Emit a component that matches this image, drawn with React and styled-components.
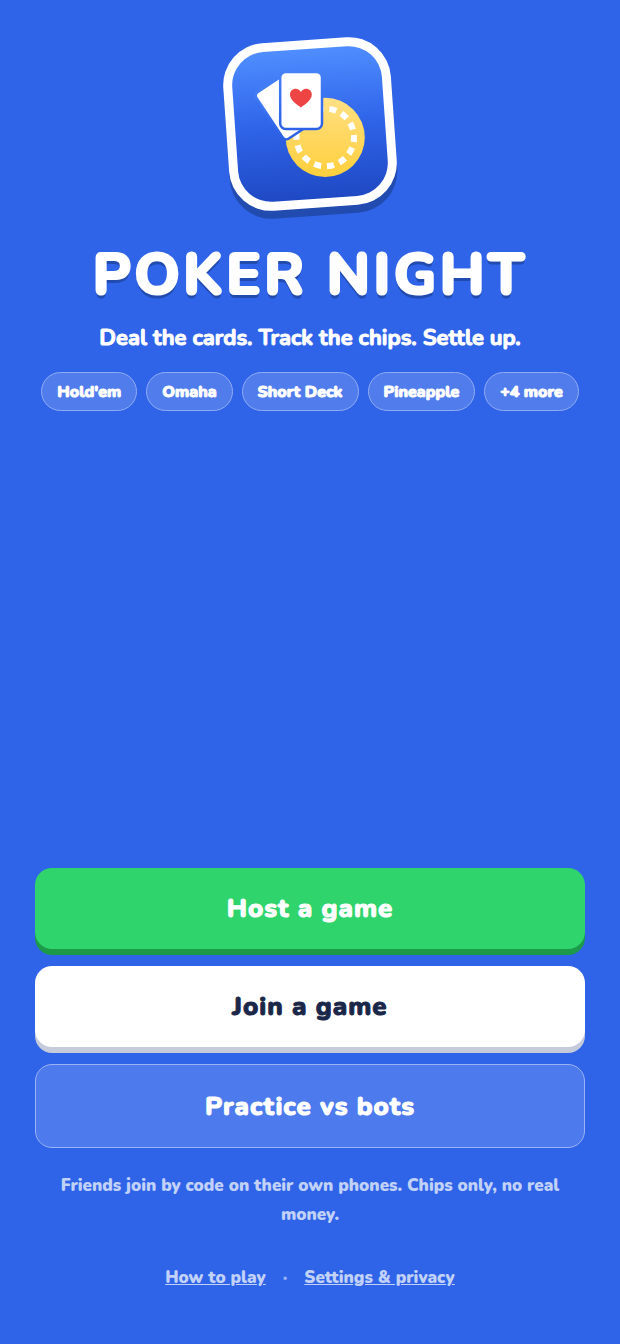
import React from 'react'
import styled, { createGlobalStyle } from 'styled-components';

const variants = ['Hold\'em', 'Omaha', 'Short Deck', 'Pineapple', '+4 more'];

function Logo() {
  return (
    <LogoSvg viewBox="0 0 200 200" role="img" aria-label="Poker Night logo">
      <defs>
        <linearGradient id="tile" gradientUnits="userSpaceOnUse" x1="0" y1="24" x2="0" y2="174">
          <stop offset="0" stopColor="#4f8dff" />
          <stop offset="0.5" stopColor="#2f64e9" />
          <stop offset="1" stopColor="#1f49c4" />
        </linearGradient>
        <linearGradient id="chip" x1="0" y1="0" x2="0" y2="1">
          <stop offset="0" stopColor="#ffe084" />
          <stop offset="1" stopColor="#ffcf3c" />
        </linearGradient>
      </defs>
      <g transform="rotate(-4 100 99)">
        <rect x="16" y="23" width="168" height="168" rx="42" fill="#224bb0" />
        <rect x="16" y="15" width="168" height="168" rx="42" fill="#fff" />
        <rect x="25" y="24" width="150" height="150" rx="33" fill="url(#tile)" />
      </g>
      <circle cx="115.2" cy="112.4" r="39.6" fill="url(#chip)" />
      <circle
        cx="115.2" cy="112.4" r="28.8" fill="none" stroke="#fff" strokeWidth="6"
        strokeDasharray="7.2 5.725" transform="rotate(-5 115.2 112.4)"
      />
      <rect
        x="56.2" y="53.4" width="41" height="56" rx="4.5" fill="#fff" stroke="url(#tile)"
        strokeWidth="2.5" transform="rotate(-33.5 76.7 81.4)"
      />
      <rect x="70.2" y="46.9" width="41.8" height="57.2" rx="5.5" fill="#fff" stroke="url(#tile)" strokeWidth="2.5" />
      <path
        d="M90.9 82.5C86 79 80 75 80 69.6C80 66 82.6 63.8 85.6 63.8C88 63.8 90 65.1 90.9 67C91.8 65.1 93.8 63.8 96.2 63.8C99.2 63.8 101.8 66 101.8 69.6C101.8 75 95.8 79 90.9 82.5Z"
        fill="#ef4444"
      />
    </LogoSvg>
  )
}

function App() {
  return (
    <>
      <GlobalStyle />
      <Page>
        <Header>
          <Logo />
          <Title>POKER NIGHT</Title>
          <Tagline>Deal the cards. Track the chips. Settle up.</Tagline>
          <Variants>
            {variants.map((name) => (
              <Variant key={name}>{name}</Variant>
            ))}
          </Variants>
        </Header>
        <Actions>
          <Action $bg="#2fd56c" $edge="#1c9a4a">Host a game</Action>
          <Action $bg="#fff" $edge="#c5cbdb" $color="#1b2749">Join a game</Action>
          <GhostAction>Practice vs bots</GhostAction>
          <Note>Friends join by code on their own phones. Chips only, no real money.</Note>
          <Links>
            <Link href="#how-to-play">How to play</Link>
            <Dot>·</Dot>
            <Link href="#settings">Settings &amp; privacy</Link>
          </Links>
        </Actions>
      </Page>
    </>
  )
}

const GlobalStyle = createGlobalStyle`
  * {
    box-sizing: border-box;
  }

  body {
    margin: 0;
    background: #2f64e9;
    color: #fff;
    font-family: Nunito, Lato, sans-serif;
  }
`;

const Page = styled.main`
  display: flex;
  flex-direction: column;
  justify-content: space-between;
  min-height: 100vh;
  padding: 25px 35px 52px;
`;

const Header = styled.header`
  display: flex;
  flex-direction: column;
  align-items: center;
  text-align: center;
`;

const LogoSvg = styled.svg`
  display: block;
  width: 200px;
  height: 200px;
`;

const Title = styled.h1`
  margin: 17px 0 0;
  font-size: 58px;
  line-height: 66px;
  font-weight: 800;
  letter-spacing: 3px;
  -webkit-text-stroke: 2px #fff;
  text-shadow: 0 4px 0 #224bb0;
`;

const Tagline = styled.p`
  margin: 15px 0 0;
  font-size: 22px;
  line-height: 30px;
  font-weight: 700;
  -webkit-text-stroke: 1px #fff;
`;

const Variants = styled.ul`
  display: flex;
  flex-wrap: wrap;
  justify-content: center;
  gap: 9px;
  margin: 19px 0 0;
  padding: 0;
  list-style: none;
`;

const Variant = styled.li`
  padding: 9px 15px 8px;
  border: 1px solid #8fabf4;
  border-radius: 20px;
  background: #517dec;
  font-size: 16px;
  line-height: 20px;
  font-weight: 800;
  -webkit-text-stroke: 1px #fff;
`;

const Actions = styled.section`
  display: flex;
  flex-direction: column;
  gap: 17px;
`;

const Action = styled.button`
  height: 81px;
  border: 0;
  border-radius: 17px;
  background: ${({ $bg }) => $bg};
  color: ${({ $color }) => $color || '#fff'};
  box-shadow: 0 6px 0 ${({ $edge }) => $edge};
  font-family: inherit;
  font-size: 26px;
  font-weight: 800;
  letter-spacing: 1px;
  -webkit-text-stroke: 1px currentColor;
  cursor: pointer;
`;

const GhostAction = styled(Action)`
  height: 84px;
  border: 1px solid #9ab3f5;
  background: #4d7aec;
  box-shadow: none;
`;

const Note = styled.p`
  margin: 6px 0 0;
  color: #c1d1f8;
  font-size: 17px;
  line-height: 29px;
  font-weight: 900;
  text-align: center;
`;

const Links = styled.nav`
  display: flex;
  justify-content: center;
  gap: 17px;
  margin-top: 17px;
  color: #97b2f4;
  font-size: 17px;
  line-height: 29px;
  font-weight: 900;
`;

const Link = styled.a`
  color: #c1d1f8;
  text-decoration: underline;
`;

const Dot = styled.span``;

export default App
